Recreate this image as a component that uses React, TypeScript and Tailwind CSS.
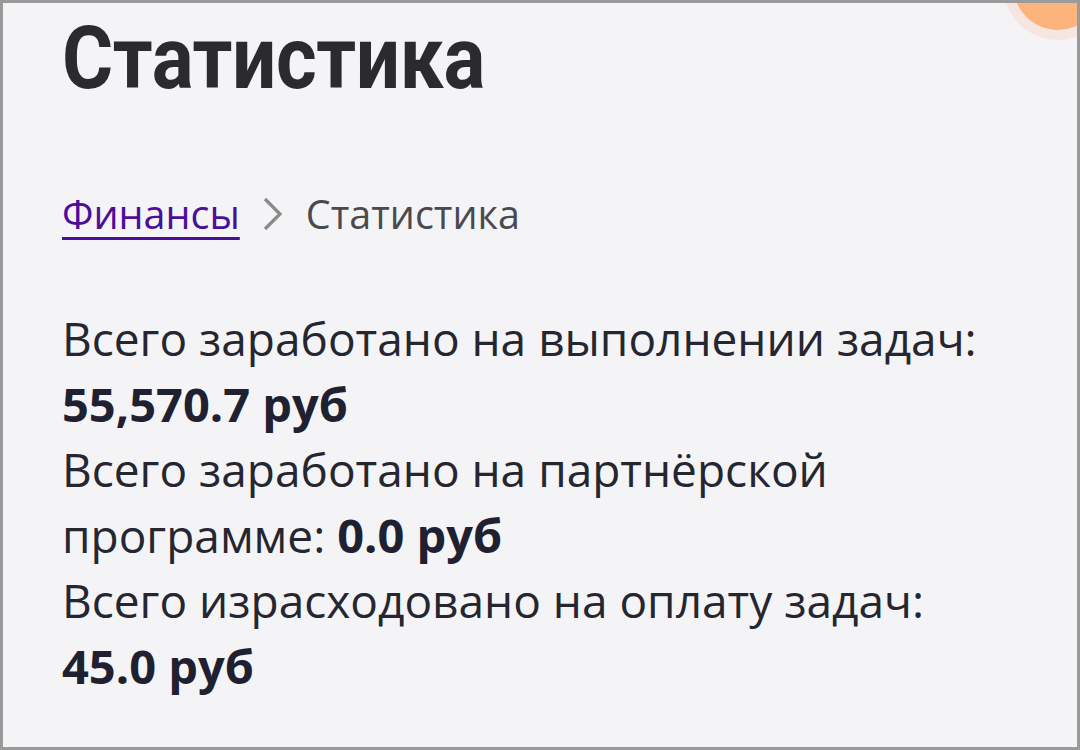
export default function App() {
  return (
    <div className="w-[1080px] h-[750px] overflow-hidden bg-[#f4f4f7] border-[3px] border-[#9a9a9a] relative" style={{ fontFamily: '"Open Sans", "Noto Sans", sans-serif' }}>
      <div className="absolute -top-[73px] -right-[36px] w-[110px] h-[110px] rounded-full bg-[#f5e6e2] flex items-center justify-center">
        <div className="w-[90px] h-[90px] rounded-full bg-[#fdb37c]" />
      </div>
      <div className="pl-[59px] pt-[0px]">
        <h1 className="text-[88px] leading-[110px] font-bold text-[#2b2b2e] tracking-[-0.5px] origin-left scale-x-[0.89] whitespace-nowrap" style={{ fontFamily: 'Roboto, sans-serif' }}>Статистика</h1>
        <div className="mt-[76px] flex items-center text-[39.5px] leading-[50px]">
          <a href="#" className="text-[#4b0e9a] underline underline-offset-[8px] decoration-[3px]">Финансы</a>
          <svg className="ml-[22px] mr-[22px]" width="22" height="36" viewBox="0 0 22 36" fill="none">
            <path d="M3 3 L18 18 L3 33" stroke="#8a8a8a" strokeWidth="3.2" />
          </svg>
          <span className="text-[#4a4a4e]">Статистика</span>
        </div>
        <div className="mt-[67px] text-[46px] leading-[65.5px] text-[#25262f] w-[940px]">
          <p>Всего заработано на выполнении задач: <b className="font-bold text-[#1f2030] text-[47px]">55,570.7 руб</b></p>
          <p>Всего заработано на партнёрской программе: <b className="font-bold text-[#1f2030] text-[47px]">0.0 руб</b></p>
          <p>Всего израсходовано на оплату задач: <b className="font-bold text-[#1f2030] text-[47px]">45.0 руб</b></p>
        </div>
      </div>
    </div>
  );
}
